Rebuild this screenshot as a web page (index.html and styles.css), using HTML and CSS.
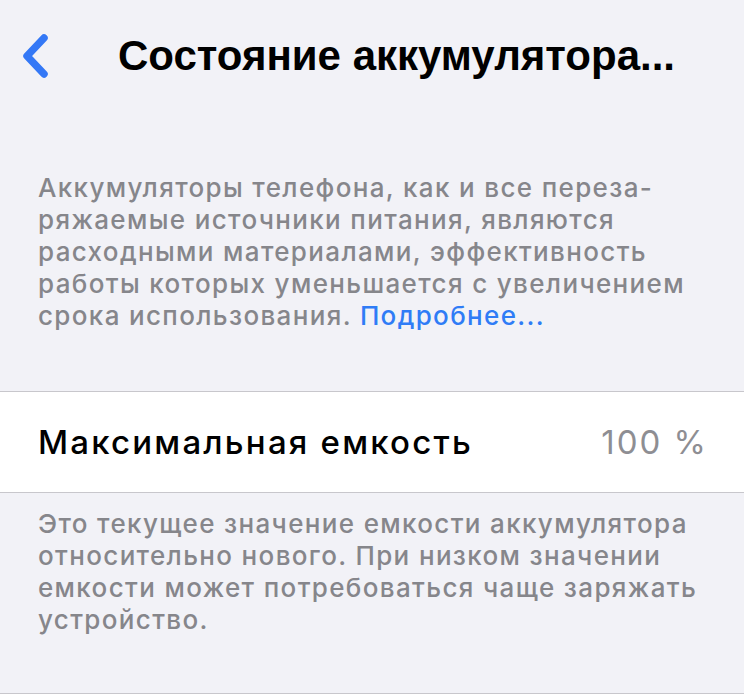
FILE: index.html
```html
<!DOCTYPE html>
<html lang="ru">
<head>
<meta charset="utf-8">
<title>Состояние аккумулятора</title>
<link rel="stylesheet" href="styles.css">
</head>
<body>
<header class="navbar">
  <a class="back" href="#" aria-label="Назад">
    <svg width="30" height="46" viewBox="0 0 30 46" aria-hidden="true">
      <polyline points="23,4 6,22 23,40" fill="none" stroke="#3478f6" stroke-width="7.5" stroke-linecap="round" stroke-linejoin="round"/>
    </svg>
  </a>
  <h1 class="title">Состояние аккумулятора...</h1>
</header>

<main>
  <p class="note note-top">Аккумуляторы телефона, как и все переза-<br>ряжаемые источники питания, являются<br>расходными материалами, эффективность<br>работы которых уменьшается с увеличением<br>срока использования. <a class="link" href="#">Подробнее...</a></p>

  <section class="group">
    <div class="row">
      <span class="row-label">Максимальная емкость</span>
      <span class="row-value">100 %</span>
    </div>
  </section>

  <p class="note note-bottom">Это текущее значение емкости аккумулятора<br>относительно нового. При низком значении<br>емкости может потребоваться чаще заряжать<br>устройство.</p>

  <section class="group group-next"></section>
</main>
</body>
</html>
```

FILE: styles.css
```css
* {
  box-sizing: border-box;
}

html, body {
  margin: 0;
  padding: 0;
}

body {
  background: #f2f2f7;
  font-family: Inter, "Noto Sans", sans-serif;
  color: #000;
  width: 744px;
  height: 700px;
  overflow: hidden;
}

.navbar {
  height: 114px;
  display: flex;
  align-items: center;
  padding-left: 21px;
}

.back {
  display: flex;
  width: 30px;
  margin-right: 67px;
  margin-top: -1px;
}

.title {
  margin: 0;
  margin-top: -3px;
  font-family: "Liberation Sans", Arial, sans-serif;
  font-size: 42px;
  font-weight: 700;
  white-space: nowrap;
}

main {
  display: flex;
  flex-direction: column;
}

.note {
  margin: 0;
  padding: 0 38px;
  font-size: 26px;
  font-weight: 500;
  letter-spacing: 1.35px;
  line-height: 32px;
  color: #86868b;
  white-space: nowrap;
}

.note-top {
  margin-top: 58px;
  margin-bottom: 59px;
}

.link {
  color: #2f7cf6;
  text-decoration: none;
}

.group {
  background: #fff;
  border-top: 1px solid #c8c7cc;
  border-bottom: 1px solid #c8c7cc;
}

.row {
  height: 100px;
  display: flex;
  align-items: center;
  justify-content: space-between;
  padding: 0 36px 0 38px;
  font-size: 33px;
  font-weight: 500;
  letter-spacing: 2.2px;
}

.row-value {
  color: #8e8e93;
  font-weight: 400;
  letter-spacing: 2px;
}

.note-bottom {
  margin-top: 15px;
  margin-bottom: 57px;
}

.group-next {
  height: 40px;
  border-bottom: none;
}
```
